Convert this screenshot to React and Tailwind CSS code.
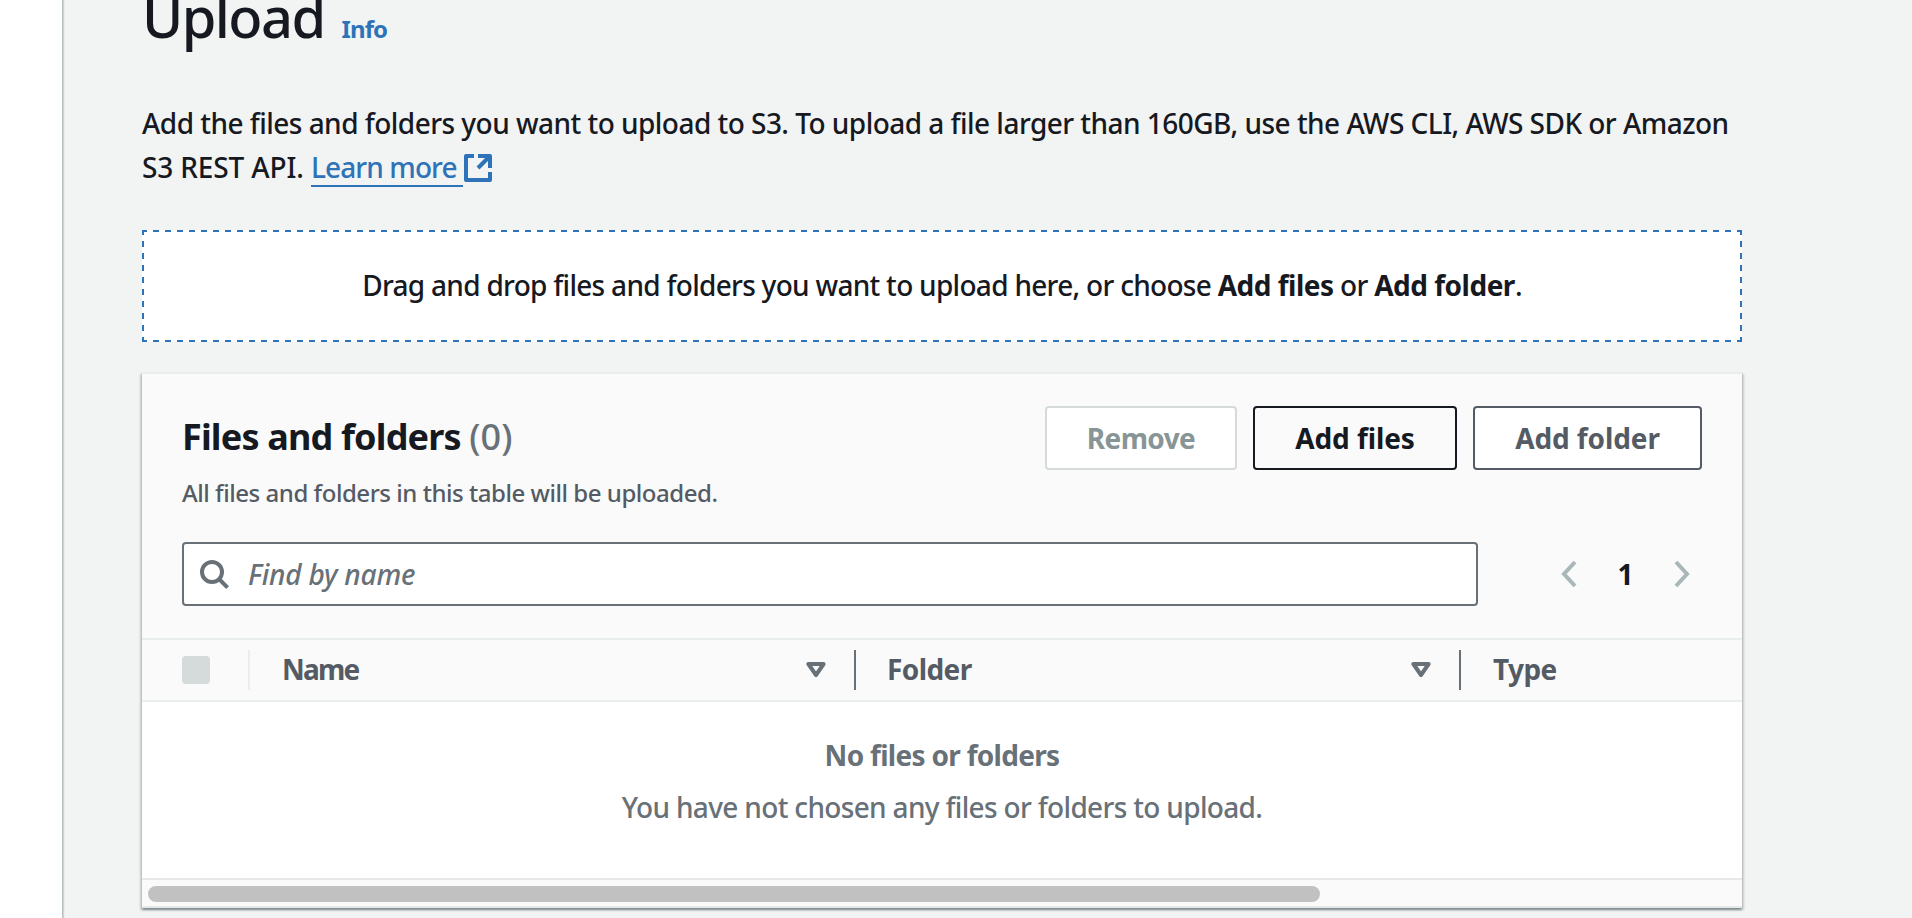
function ExternalIcon() {
  return (
    <svg width="28" height="28" viewBox="0 0 28 28" fill="none" stroke="currentColor" strokeWidth="4" className="ml-[1px] inline-block align-[-4px]">
      <path d="M10 2H2V26H26V18" strokeLinejoin="round" />
      <path d="M14 2H26V14" strokeLinejoin="round" />
      <path d="M26 2L14 14" />
    </svg>
  );
}

function SearchIcon() {
  return (
    <svg width="30" height="30" viewBox="0 0 30 30" fill="none" stroke="#687078" strokeWidth="4" className="mt-[2px] shrink-0">
      <circle cx="12" cy="12" r="10" />
      <path d="M19 19L27.6 27.6" />
    </svg>
  );
}

function Chevron({ d }) {
  return (
    <svg width="16" height="28" viewBox="0 0 16 28" fill="none" stroke="#aab7b8" strokeWidth="4">
      <path d={d} />
    </svg>
  );
}

function SortIcon() {
  return (
    <svg width="20" height="16" viewBox="0 0 20 16" fill="none" stroke="#687078" strokeWidth="4" strokeLinejoin="round">
      <path d="M2.4 2H17.6L10 13Z" />
    </svg>
  );
}

function Button({ className, children }) {
  return (
    <button className={"flex h-16 items-center justify-center rounded-[4px] border-2 pb-[1px] font-bold leading-[44px] " + className}>
      {children}
    </button>
  );
}

// Evenly spaced 6px dashes with matching corners on every side.
function DashX() {
  return <div className="h-[2px] bg-[repeating-linear-gradient(90deg,#2e73b8_0_5px,#fff_5px_11px,#2e73b8_11px_12px)]" />;
}

function DashY() {
  return <div className="w-[2px] bg-[repeating-linear-gradient(180deg,#2e73b8_0_3px,#fff_3px_9px,#2e73b8_9px_12px)]" />;
}

export default function App() {
  return (
    <div className="flex h-[918px] w-[1912px] overflow-hidden bg-[#f2f3f3] font-['Noto_Sans',sans-serif] text-[28px] leading-[44px] font-medium whitespace-nowrap text-[#16191f]">
      <aside className="z-10 w-[62px] shrink-0 bg-white shadow-[1px_0_0_0_#b8c0c4,2px_0_1px_0_rgba(0,28,36,0.15)]" />
      <main className="ml-20 w-[1600px]">
        <header className="-mt-3 flex h-14 items-baseline">
          <h1 className="text-[56px] leading-[56px] tracking-[-1.6px]">Upload</h1>
          <a className="ml-[17px] text-[24px] font-bold leading-8 tracking-[-0.9px] text-[#2e73b8]">Info</a>
        </header>

        <p className="mt-[57px] h-[88px]">
          <span className="block tracking-[-0.53px]">
            Add the files and folders you want to upload to S3. To upload a file larger than 160GB, use the AWS CLI, AWS SDK or Amazon
          </span>
          <span className="block tracking-[-0.13px]">
            S3 REST API.{" "}
            <a className="text-[#2e73b8]">
              <span className="inline-block h-[42px] border-b-2 border-[#2e73b8] leading-[44px] tracking-[-0.9px] whitespace-pre">{"Learn more "}</span>
              <ExternalIcon />
            </a>
          </span>
        </p>

        <div className="mt-[41px] flex h-[112px] flex-col bg-white">
          <DashX />
          <div className="flex flex-1 justify-between">
            <DashY />
            <p className="self-center pb-[2px] tracking-[-0.71px]">
              Drag and drop files and folders you want to upload here, or choose <b className="tracking-[-0.5px]">Add files</b> or{" "}
              <b className="tracking-[-0.5px]">Add folder</b>.
            </p>
            <DashY />
          </div>
          <DashX />
        </div>

        <section className="mt-[30px] h-[536px] border-t-2 border-[#eaeded] bg-white shadow-[0_2px_2px_0_rgba(0,28,36,0.3),2px_2px_2px_0_rgba(0,28,36,0.15),-2px_2px_2px_0_rgba(0,28,36,0.15)]">
          <div className="h-[266px] border-b-2 border-[#eaeded] bg-[#fafafa] px-10 pt-8">
            <div className="flex h-[136px] justify-between">
              <div className="pt-[7px]">
                <h2 className="text-[36px] font-bold leading-[48px] tracking-[-0.83px]">
                  Files and folders <span className="font-medium tracking-[0.1px] text-[#687078]">(0)</span>
                </h2>
                <p className="mt-4 text-[24px] leading-8 tracking-[-0.46px] text-[#545b64]">All files and folders in this table will be uploaded.</p>
              </div>
              <div className="flex gap-4 tracking-[-0.1px]">
                <Button className="w-[192px] border-[#d5dbdb] bg-white tracking-[-0.6px] text-[#879596]">Remove</Button>
                <Button className="w-[204px] border-[#16191f] bg-[#fafafa] text-[#16191f]">Add files</Button>
                <Button className="w-[229px] border-[#545b64] bg-white text-[#545b64]">Add folder</Button>
              </div>
            </div>
            <div className="flex items-center">
              <div className="flex h-16 w-[1296px] items-center rounded-[4px] border-2 border-[#687078] bg-white pl-4">
                <SearchIcon />
                <span className="ml-[18px] tracking-[-0.2px] italic text-[#687078]">Find by name</span>
              </div>
              <div className="ml-[83px] flex items-center">
                <Chevron d="M14 2L3 14L14 26" />
                <span className="w-[97px] pb-[1px] text-center font-bold">1</span>
                <Chevron d="M2 2L13 14L2 26" />
              </div>
            </div>
          </div>

          <div className="flex h-[62px] items-center border-b-2 border-[#eaeded] bg-[#fafafa] font-bold tracking-[-0.6px] text-[#545b64]">
            <div className="flex h-10 w-[108px] items-center border-r-2 border-[#eaeded] pl-10">
              <span className="h-7 w-7 rounded-[4px] bg-[#d5dbdb]" />
            </div>
            <div className="flex h-10 w-[606px] items-center justify-between border-r-2 border-[#687078] pr-7 pl-8">
              <span className="pb-[2px] tracking-[-1.8px]">Name</span>
              <SortIcon />
            </div>
            <div className="flex h-10 w-[605px] items-center justify-between border-r-2 border-[#687078] pr-7 pl-[31px]">
              <span className="pb-[2px]">Folder</span>
              <SortIcon />
            </div>
            <div className="pb-[2px] pl-[32px]">Type</div>
          </div>

          <div className="h-[176px] pt-[31px] text-center text-[#687078]">
            <p className="font-bold tracking-[-0.7px]">No files or folders</p>
            <p className="mt-2 tracking-[-0.67px]">You have not chosen any files or folders to upload.</p>
          </div>

          <div className="h-[30px] border-y-2 border-[#e8e8e8] bg-[#fafafa] pt-[6px] pl-[6px]">
            <div className="h-4 w-[1172px] rounded-full bg-[#c1c1c1]" />
          </div>
        </section>
      </main>
    </div>
  );
}
